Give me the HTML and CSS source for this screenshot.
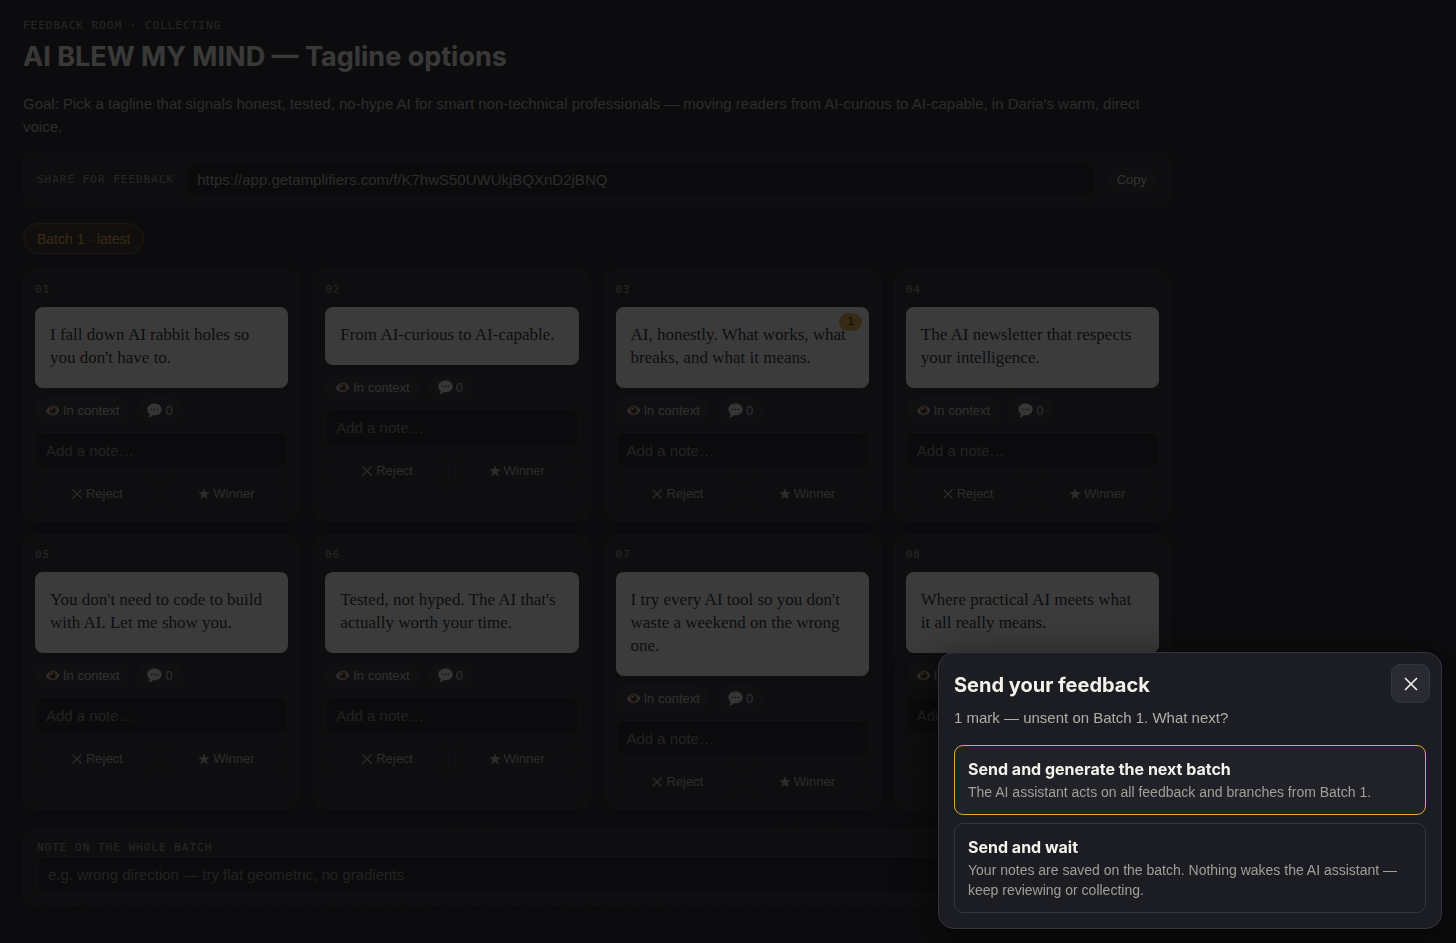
FILE: index.html
```html
<!DOCTYPE html>
<html lang="en">

<head>
    <meta charset="UTF-8">
    <meta name="viewport" content="width=device-width, initial-scale=1.0">
    <title>Feedback room</title>
    <link rel="stylesheet" href="styles.css">
</head>

<body>

    <!-- Shared icons -->
    <svg class="sprite" aria-hidden="true">
        <symbol id="icon-eye" viewBox="0 0 16 16">
            <path d="M1 8.6C3 4.600 5.500 3 8.400 3c3 0 5.200 1.800 6.800 4.600-1.400 3.200-3.800 5.400-7 5.400C5 13 2.600 11.400 1 8.600z" fill="#d9d2cb" />
            <circle cx="8.300" cy="8" r="4.300" fill="#8a5a2b" />
            <circle cx="8.300" cy="8" r="2.300" fill="#120a05" />
            <circle cx="7" cy="6.400" r="1" fill="#fff" />
            <path d="M1 8.200C3 4.400 5.500 2.600 8.400 2.600c3 0 5.300 1.800 6.900 4.800" fill="none" stroke="#5d4a40" stroke-width="1" />
        </symbol>
        <symbol id="icon-bubble" viewBox="0 0 16 16">
            <path d="M8 .6C3.700.6.4 3.200.4 6.800c0 2.100 1 3.700 2.500 4.700.1 1.400-.5 2.600-1.500 3.700 2 0 3.800-.9 4.900-2.400.5.100 1.100.2 1.700.2 4.300 0 7.600-2.600 7.600-6.200S12.300.6 8 .6z" fill="#e6e6e6" />
            <circle cx="4.800" cy="6.800" r=".9" fill="#444" />
            <circle cx="8" cy="6.800" r=".9" fill="#444" />
            <circle cx="11.200" cy="6.800" r=".9" fill="#444" />
        </symbol>
        <symbol id="icon-x" viewBox="0 0 12 12">
            <path d="M1.500 1.500l9 9M10.500 1.500l-9 9" fill="none" stroke="currentColor" stroke-width="1.200" />
        </symbol>
        <symbol id="icon-star" viewBox="0 0 12 12">
            <path d="M6 0l1.500 4.200h4.400L8.400 6.900l1.300 4.600L6 8.800l-3.700 2.700 1.300-4.600L.1 4.200h4.400z" fill="currentColor" />
        </symbol>
    </svg>

    <main class="room">
        <header>
            <p class="label">Feedback room · Collecting</p>
            <h1>AI BLEW MY MIND — Tagline options</h1>
            <p class="goal">Goal: Pick a tagline that signals honest, tested, no-hype AI for smart non-technical professionals — moving readers from AI-curious to AI-capable, in Daria's warm, direct voice.</p>
        </header>

        <div class="share">
            <label class="label" for="share-link">Share for feedback</label>
            <input type="text" class="field" id="share-link" value="https://app.getamplifiers.com/f/K7hwS50UWUkjBQXnD2jBNQ" readonly>
            <button type="button" class="chip">Copy</button>
        </div>

        <button type="button" class="batch">Batch 1 · latest</button>

        <section class="cards">
            <article class="card">
                <span class="number">01</span>
                <div class="tagline">I fall down AI rabbit holes so you don't have to.</div>
                <div class="chips">
                    <button type="button" class="chip"><svg class="emoji"><use href="#icon-eye" /></svg>In context</button>
                    <button type="button" class="chip"><svg class="emoji"><use href="#icon-bubble" /></svg>0</button>
                </div>
                <input type="text" class="field" placeholder="Add a note…" aria-label="Note on 01">
                <div class="votes">
                    <button type="button" class="vote"><svg><use href="#icon-x" /></svg>Reject</button>
                    <button type="button" class="vote"><svg><use href="#icon-star" /></svg>Winner</button>
                </div>
            </article>
            <article class="card">
                <span class="number">02</span>
                <div class="tagline">From AI-curious to AI-capable.</div>
                <div class="chips">
                    <button type="button" class="chip"><svg class="emoji"><use href="#icon-eye" /></svg>In context</button>
                    <button type="button" class="chip"><svg class="emoji"><use href="#icon-bubble" /></svg>0</button>
                </div>
                <input type="text" class="field" placeholder="Add a note…" aria-label="Note on 02">
                <div class="votes">
                    <button type="button" class="vote"><svg><use href="#icon-x" /></svg>Reject</button>
                    <button type="button" class="vote"><svg><use href="#icon-star" /></svg>Winner</button>
                </div>
            </article>
            <article class="card">
                <span class="number">03</span>
                <div class="tagline">AI, honestly. What works, what breaks, and what it means.<span class="marks">1</span></div>
                <div class="chips">
                    <button type="button" class="chip"><svg class="emoji"><use href="#icon-eye" /></svg>In context</button>
                    <button type="button" class="chip"><svg class="emoji"><use href="#icon-bubble" /></svg>0</button>
                </div>
                <input type="text" class="field" placeholder="Add a note…" aria-label="Note on 03">
                <div class="votes">
                    <button type="button" class="vote"><svg><use href="#icon-x" /></svg>Reject</button>
                    <button type="button" class="vote"><svg><use href="#icon-star" /></svg>Winner</button>
                </div>
            </article>
            <article class="card">
                <span class="number">04</span>
                <div class="tagline">The AI newsletter that respects your intelligence.</div>
                <div class="chips">
                    <button type="button" class="chip"><svg class="emoji"><use href="#icon-eye" /></svg>In context</button>
                    <button type="button" class="chip"><svg class="emoji"><use href="#icon-bubble" /></svg>0</button>
                </div>
                <input type="text" class="field" placeholder="Add a note…" aria-label="Note on 04">
                <div class="votes">
                    <button type="button" class="vote"><svg><use href="#icon-x" /></svg>Reject</button>
                    <button type="button" class="vote"><svg><use href="#icon-star" /></svg>Winner</button>
                </div>
            </article>
            <article class="card">
                <span class="number">05</span>
                <div class="tagline">You don't need to code to build with AI. Let me show you.</div>
                <div class="chips">
                    <button type="button" class="chip"><svg class="emoji"><use href="#icon-eye" /></svg>In context</button>
                    <button type="button" class="chip"><svg class="emoji"><use href="#icon-bubble" /></svg>0</button>
                </div>
                <input type="text" class="field" placeholder="Add a note…" aria-label="Note on 05">
                <div class="votes">
                    <button type="button" class="vote"><svg><use href="#icon-x" /></svg>Reject</button>
                    <button type="button" class="vote"><svg><use href="#icon-star" /></svg>Winner</button>
                </div>
            </article>
            <article class="card">
                <span class="number">06</span>
                <div class="tagline">Tested, not hyped. The AI that's actually worth your time.</div>
                <div class="chips">
                    <button type="button" class="chip"><svg class="emoji"><use href="#icon-eye" /></svg>In context</button>
                    <button type="button" class="chip"><svg class="emoji"><use href="#icon-bubble" /></svg>0</button>
                </div>
                <input type="text" class="field" placeholder="Add a note…" aria-label="Note on 06">
                <div class="votes">
                    <button type="button" class="vote"><svg><use href="#icon-x" /></svg>Reject</button>
                    <button type="button" class="vote"><svg><use href="#icon-star" /></svg>Winner</button>
                </div>
            </article>
            <article class="card">
                <span class="number">07</span>
                <div class="tagline">I try every AI tool so you don't waste a weekend on the wrong one.</div>
                <div class="chips">
                    <button type="button" class="chip"><svg class="emoji"><use href="#icon-eye" /></svg>In context</button>
                    <button type="button" class="chip"><svg class="emoji"><use href="#icon-bubble" /></svg>0</button>
                </div>
                <input type="text" class="field" placeholder="Add a note…" aria-label="Note on 07">
                <div class="votes">
                    <button type="button" class="vote"><svg><use href="#icon-x" /></svg>Reject</button>
                    <button type="button" class="vote"><svg><use href="#icon-star" /></svg>Winner</button>
                </div>
            </article>
            <article class="card">
                <span class="number">08</span>
                <div class="tagline">Where practical AI meets what it all really means.</div>
                <div class="chips">
                    <button type="button" class="chip"><svg class="emoji"><use href="#icon-eye" /></svg>In context</button>
                    <button type="button" class="chip"><svg class="emoji"><use href="#icon-bubble" /></svg>0</button>
                </div>
                <input type="text" class="field" placeholder="Add a note…" aria-label="Note on 08">
                <div class="votes">
                    <button type="button" class="vote"><svg><use href="#icon-x" /></svg>Reject</button>
                    <button type="button" class="vote"><svg><use href="#icon-star" /></svg>Winner</button>
                </div>
            </article>
        </section>

        <div class="batch-note">
            <label class="label" for="batch-note">Note on the whole batch</label>
            <input type="text" class="field" id="batch-note" placeholder="e.g. wrong direction — try flat geometric, no gradients">
        </div>
    </main>

    <div class="backdrop"></div>

    <!-- Send dialog -->
    <section class="send" role="dialog" aria-labelledby="send-title">
        <h2 id="send-title">Send your feedback</h2>
        <p>1 mark — unsent on Batch 1. What next?</p>
        <button type="button" class="close" aria-label="Close"><svg><use href="#icon-x" /></svg></button>
        <div class="options">
            <button type="button" class="option primary">
                <strong>Send and generate the next batch</strong>
                <span>The AI assistant acts on all feedback and branches from Batch 1.</span>
            </button>
            <button type="button" class="option">
                <strong>Send and wait</strong>
                <span>Your notes are saved on the batch. Nothing wakes the AI assistant — keep reviewing or collecting.</span>
            </button>
        </div>
    </section>

</body>

</html>
```
FILE: styles.css
```css
* {
    box-sizing: border-box;
}

body {
    margin: 0;
    background-color: #17171a;
    color: #f4f2ea;
    font-family: "Liberation Sans", Arial, sans-serif;
    font-size: 15px;
}

h1,
h2,
p {
    margin: 0;
}

h1,
h2,
strong {
    font-family: Inter, sans-serif;
    font-weight: 700;
}

button,
input {
    font-family: inherit;
    color: inherit;
    margin: 0;
}

button {
    cursor: pointer;
}

.sprite {
    position: absolute;
    width: 0;
    height: 0;
}

.room {
    max-width: 1194px;
    padding: 18px 23px;
}

.label,
.number {
    font-family: "DejaVu Sans Mono", monospace;
    font-size: 11px;
    line-height: 16px;
    letter-spacing: 1px;
    text-transform: uppercase;
    color: #9c9a92;
}

h1 {
    margin-top: 6px;
    font-size: 27px;
    line-height: 34px;
}

.goal {
    margin-top: 18px;
    line-height: 23px;
    color: #b4b2aa;
}

.field {
    width: 100%;
    height: 37px;
    padding: 0 10px;
    background-color: #121215;
    border: 1px solid #2e2e34;
    border-radius: 8px;
    font-size: 15px;
}

.field::placeholder {
    color: #84827e;
    opacity: 1;
}

.share {
    display: flex;
    align-items: center;
    gap: 12px;
    margin-top: 14px;
    padding: 9px 13px;
    background-color: #222226;
    border: 1px solid #2e2e34;
    border-radius: 12px;
}

.share .label {
    flex-shrink: 0;
}

.share .field {
    height: 35px;
    font-size: 15px;
    color: #b4b2aa;
}

.chip {
    display: flex;
    align-items: center;
    gap: 3px;
    height: 26px;
    padding: 0 9px;
    background-color: #29292e;
    border: 1px solid #29292e;
    border-radius: 13px;
    font-size: 13px;
    color: #ccc9c0;
}

.batch {
    display: block;
    height: 31px;
    margin: 16px 0;
    padding: 0 13px;
    background-color: #2a2419;
    border: 1px solid #6b5228;
    border-radius: 16px;
    font-size: 14px;
    color: #e5a93c;
}

.cards {
    display: grid;
    grid-template-columns: repeat(4, 1fr);
    gap: 14px 13px;
}

.card {
    display: flex;
    flex-direction: column;
    gap: 9px;
    padding: 11px;
    background-color: #222226;
    border: 1px solid #2e2e34;
    border-radius: 12px;
}

.tagline {
    position: relative;
    padding: 16px 15px 19px;
    background-color: #fff;
    border-radius: 8px;
    font-family: "Liberation Serif", serif;
    font-size: 17px;
    line-height: 23px;
    color: #1a1a1a;
}

.marks {
    position: absolute;
    top: 6px;
    right: 7px;
    padding: 0 8px;
    background-color: #e5a93c;
    border-radius: 9px;
    font-family: "DejaVu Sans Mono", monospace;
    font-size: 11px;
    line-height: 18px;
}

.chips {
    display: flex;
    gap: 8px;
}

.emoji {
    width: 15px;
    height: 15px;
}

.votes {
    display: flex;
    gap: 6px;
}

.vote {
    display: flex;
    flex: 1;
    align-items: center;
    justify-content: center;
    gap: 3px;
    height: 31px;
    padding: 0;
    background: none;
    border: 1px solid #2e2e34;
    border-radius: 8px;
    font-size: 13px;
    color: #b4b2aa;
}

.vote svg {
    width: 12px;
    height: 12px;
}

.batch-note {
    display: flex;
    flex-direction: column;
    margin-top: 19px;
    padding: 11px 13px;
    background-color: #222226;
    border: 1px dashed #34343a;
    border-radius: 12px;
}

.backdrop {
    position: fixed;
    inset: 0;
    background-color: rgba(10, 10, 11, 0.8);
}

.send {
    position: fixed;
    right: 14px;
    bottom: 14px;
    width: 504px;
    max-width: calc(100% - 28px);
    padding: 19px 15px 15px;
    background-color: #1c1d23;
    border: 1px solid #34353f;
    border-radius: 16px;
    box-shadow: 0 10px 40px rgba(0, 0, 0, 0.6);
}

.send h2 {
    font-size: 20px;
    line-height: 26px;
}

.send p {
    margin: 9px 0 16px;
    line-height: 22px;
    color: #b0aea6;
}

.close {
    position: absolute;
    top: 11px;
    right: 11px;
    display: flex;
    align-items: center;
    justify-content: center;
    width: 39px;
    height: 39px;
    padding: 0;
    background-color: #2a2a33;
    border: 1px solid #34353f;
    border-radius: 9px;
}

.close svg {
    width: 16px;
    height: 16px;
}

.options {
    display: flex;
    flex-direction: column;
    gap: 8px;
}

.option {
    display: flex;
    flex-direction: column;
    gap: 2px;
    padding: 12px 13px;
    background-color: #1c1d23;
    border: 1px solid #34353f;
    border-radius: 9px;
    text-align: left;
}

.option strong {
    font-size: 16px;
    line-height: 22px;
}

.option span {
    font-size: 14px;
    line-height: 20px;
    color: #a19f98;
}

.option.primary {
    background-color: #212228;
    border-color: #e0a93e;
}
```
